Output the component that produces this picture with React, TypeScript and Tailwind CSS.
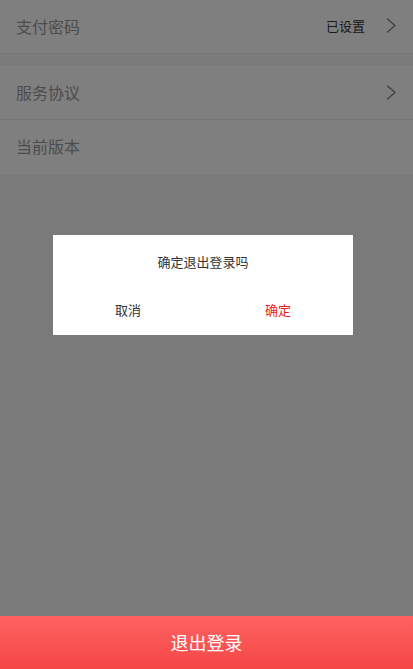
const Chevron = () => (
    <svg width="11" height="15" viewBox="0 0 11 15" fill="none" className="text-[#888]">
        <path d="M1.5 1 L9 7.5 L1.5 14" stroke="currentColor" strokeWidth="1.5" strokeLinecap="round" strokeLinejoin="round" />
    </svg>
);

const Row = ({ label, value, arrow, className }: { label: string; value?: string; arrow?: boolean; className: string }) => (
    <div className={`flex items-center justify-between bg-white pl-4 pr-[16px] ${className}`}>
        <span className="text-[16px] leading-none text-[#999]">{label}</span>
        <div className="flex items-center">
            {value && <span className="text-[13px] leading-none text-[#333] mr-[21px]">{value}</span>}
            {arrow && <Chevron />}
        </div>
    </div>
);

export default function App() {
    return (
        <div className="relative min-h-[669px] bg-[#f5f5f5]" style={{ fontFamily: '"Noto Sans CJK SC", "Noto Sans", sans-serif' }}>
            {/* Settings list */}
            <Row label="支付密码" value="已设置" arrow className="h-[54px] pb-[2px] border-b border-[#ececec]" />
            <div className="h-[11px]" />
            <Row label="服务协议" arrow className="h-[55px] border-b border-[#ececec]" />
            <Row label="当前版本" className="h-[55px] pb-[3px]" />

            {/* Mask + dialog */}
            <div className="fixed inset-0 z-10 bg-black/50 flex justify-start pl-[53px] pt-[235px]">
                <div className="w-[300px] h-[100px] bg-white flex flex-col">
                    <div className="h-[52px] flex items-center justify-center text-[13px] leading-none text-[#333]">
                        确定退出登录吗
                    </div>
                    <div className="flex-1 flex items-center pb-[4px] text-[13px] leading-none">
                        <button className="flex-1 text-[#333]">取消</button>
                        <button className="flex-1 text-[#ee1c1c]">确定</button>
                    </div>
                </div>
            </div>

            {/* Logout button */}
            <button className="fixed bottom-0 left-0 right-0 z-20 h-[53px] bg-gradient-to-b from-[#ff6262] to-[#f44545] text-white text-[18px]">
                退出登录
            </button>
        </div>
    );
}
